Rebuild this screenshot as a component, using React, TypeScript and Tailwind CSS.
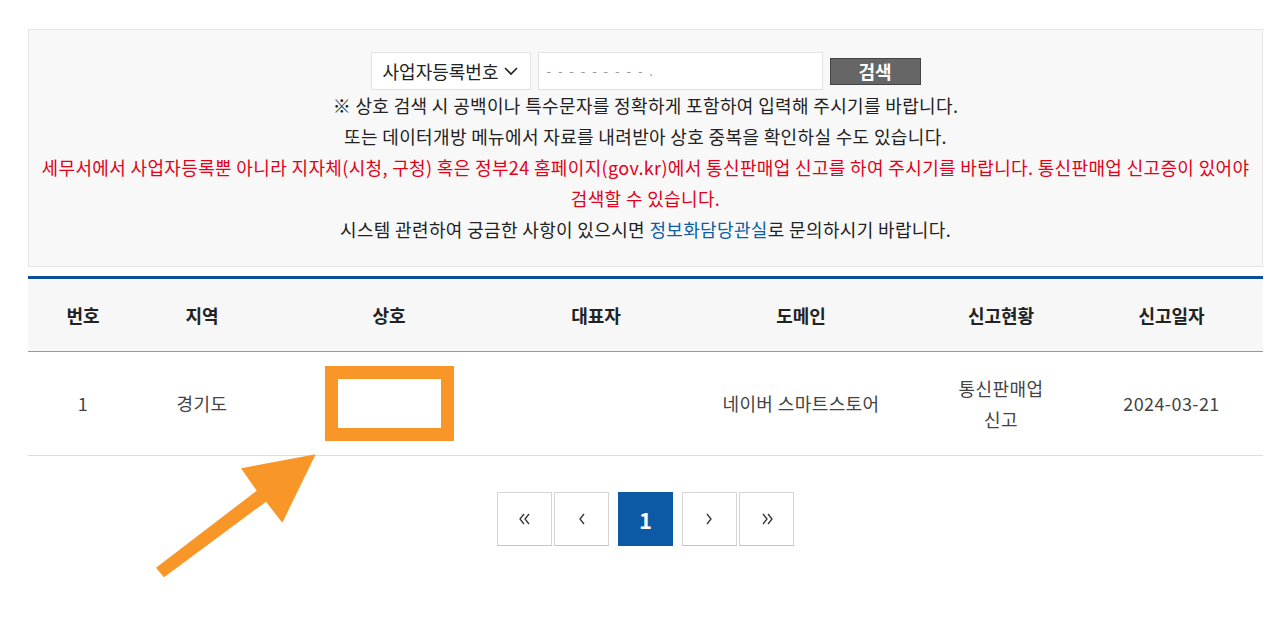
import React from 'react';

const columns = [
  { label: '번호', width: 'w-[110px]' },
  { label: '지역', width: 'w-[128px]' },
  { label: '상호', width: 'w-[246px]' },
  { label: '대표자', width: 'w-[168px]' },
  { label: '도메인', width: 'w-[242px]' },
  { label: '신고현황', width: 'w-[158px]' },
  { label: '신고일자', width: 'w-[183px]' },
];

const ChevLeft = ({ double }: { double?: boolean }) => (
  <svg width={double ? 16 : 9} height="16" viewBox={double ? '0 0 16 16' : '0 0 9 16'} fill="none" stroke="#333" strokeWidth="1.3">
    {double ? (
      <>
        <polyline points="7,3 3,8 7,13" />
        <polyline points="12,3 8,8 12,13" />
      </>
    ) : (
      <polyline points="7,3 3,8 7,13" />
    )}
  </svg>
);

const ChevRight = ({ double }: { double?: boolean }) => (
  <svg width={double ? 16 : 9} height="16" viewBox={double ? '0 0 16 16' : '0 0 9 16'} fill="none" stroke="#333" strokeWidth="1.3">
    {double ? (
      <>
        <polyline points="4,3 8,8 4,13" />
        <polyline points="9,3 13,8 9,13" />
      </>
    ) : (
      <polyline points="2,3 6,8 2,13" />
    )}
  </svg>
);

const PageBtn = ({ children, active }: { children: React.ReactNode; active?: boolean }) => (
  <button
    className={
      active
        ? 'w-[55px] h-[54px] flex items-center justify-center bg-[#0c5aa6] border border-[#0c5aa6] text-white text-[22px] font-bold'
        : 'w-[55px] h-[54px] flex items-center justify-center bg-white border border-[#d6d6d6] border-b-[#c4c4c4]'
    }
  >
    {children}
  </button>
);

export default function App() {
  return (
    <div className="relative w-[1280px] h-[623px] bg-white pl-[28px] pr-[17px] pt-[29px] font-['Noto_Sans_CJK_KR',sans-serif] text-[#222] overflow-hidden">
      {/* search box */}
      <div className="h-[238px] bg-[#f8f8f8] border border-[#e6e6e6] pt-[22px] flex flex-col items-center">
        <div className="flex items-center gap-[7px] h-[38px]">
          <div className="w-[160px] h-[38px] bg-white border border-[#e2e2e2] flex items-center justify-center gap-[6px] text-[18px] text-[#222]">
            <span>사업자등록번호</span>
            <svg width="14" height="9" viewBox="0 0 14 9" fill="none" stroke="#222" strokeWidth="1.6">
              <polyline points="1,1 7,7 13,1" />
            </svg>
          </div>
          <div className="w-[285px] h-[38px] bg-white border border-[#e2e2e2] flex items-center pl-[8px] text-[13px] text-[#999] tracking-[2px]">
            - - - - - - - - - .
          </div>
          <button className="w-[91px] h-[27px] bg-[#666] border border-[#444] text-white text-[18px] font-bold leading-none flex items-center justify-center">
            검색
          </button>
        </div>
        <div className="text-center text-[18px] leading-[31px] tracking-[0.35px] whitespace-nowrap">
          <p>※ 상호 검색 시 공백이나 특수문자를 정확하게 포함하여 입력해 주시기를 바랍니다.</p>
          <p>또는 데이터개방 메뉴에서 자료를 내려받아 상호 중복을 확인하실 수도 있습니다.</p>
          <p className="text-[#e2001a]">
            세무서에서 사업자등록뿐 아니라 지자체(시청, 구청) 혹은 정부24 홈페이지(gov.kr)에서 통신판매업 신고를 하여 주시기를 바랍니다. 통신판매업 신고증이 있어야
            <br />
            검색할 수 있습니다.
          </p>
          <p>
            시스템 관련하여 궁금한 사항이 있으시면 <span className="text-[#0b5fa5]">정보화담당관실</span>로 문의하시기 바랍니다.
          </p>
        </div>
      </div>

      {/* result table */}
      <table className="mt-[9px] w-full table-fixed border-t-[3px] border-[#0c4e9c] border-collapse">
        <thead>
          <tr className="h-[74px] bg-[#f7f7f7] border-b border-[#999]">
            {columns.map((c) => (
              <th key={c.label} className={`${c.width} text-[18px] font-bold text-[#222]`}>
                {c.label}
              </th>
            ))}
          </tr>
        </thead>
        <tbody>
          <tr className="h-[104px] border-b border-[#dcdcdc] text-[18px] tracking-[0.4px] text-[#444] text-center">
            <td>1</td>
            <td>경기도</td>
            <td>
              <div className="mx-auto w-[129px] h-[75px] border-[13px] border-[#f89628] bg-white" />
            </td>
            <td></td>
            <td>네이버 스마트스토어</td>
            <td className="leading-[31px]">
              통신판매업
              <br />
              신고
            </td>
            <td>2024-03-21</td>
          </tr>
        </tbody>
      </table>

      {/* pagination */}
      <div className="mt-[36px] flex justify-center items-center">
        <div className="flex gap-[2px]">
          <PageBtn><ChevLeft double /></PageBtn>
          <PageBtn><ChevLeft /></PageBtn>
        </div>
        <div className="mx-[9px]">
          <PageBtn active>1</PageBtn>
        </div>
        <div className="flex gap-[2px]">
          <PageBtn><ChevRight /></PageBtn>
          <PageBtn><ChevRight double /></PageBtn>
        </div>
      </div>

      {/* annotation arrow */}
      <svg className="absolute left-0 top-0 pointer-events-none" width="1280" height="623" viewBox="0 0 1280 623">
        <polygon
          fill="#f89628"
          points="315.7,454.3 241,468.3 256.7,490.7 156,567.7 164,577.3 266,501.7 282.3,522.7"
        />
      </svg>
    </div>
  );
}
